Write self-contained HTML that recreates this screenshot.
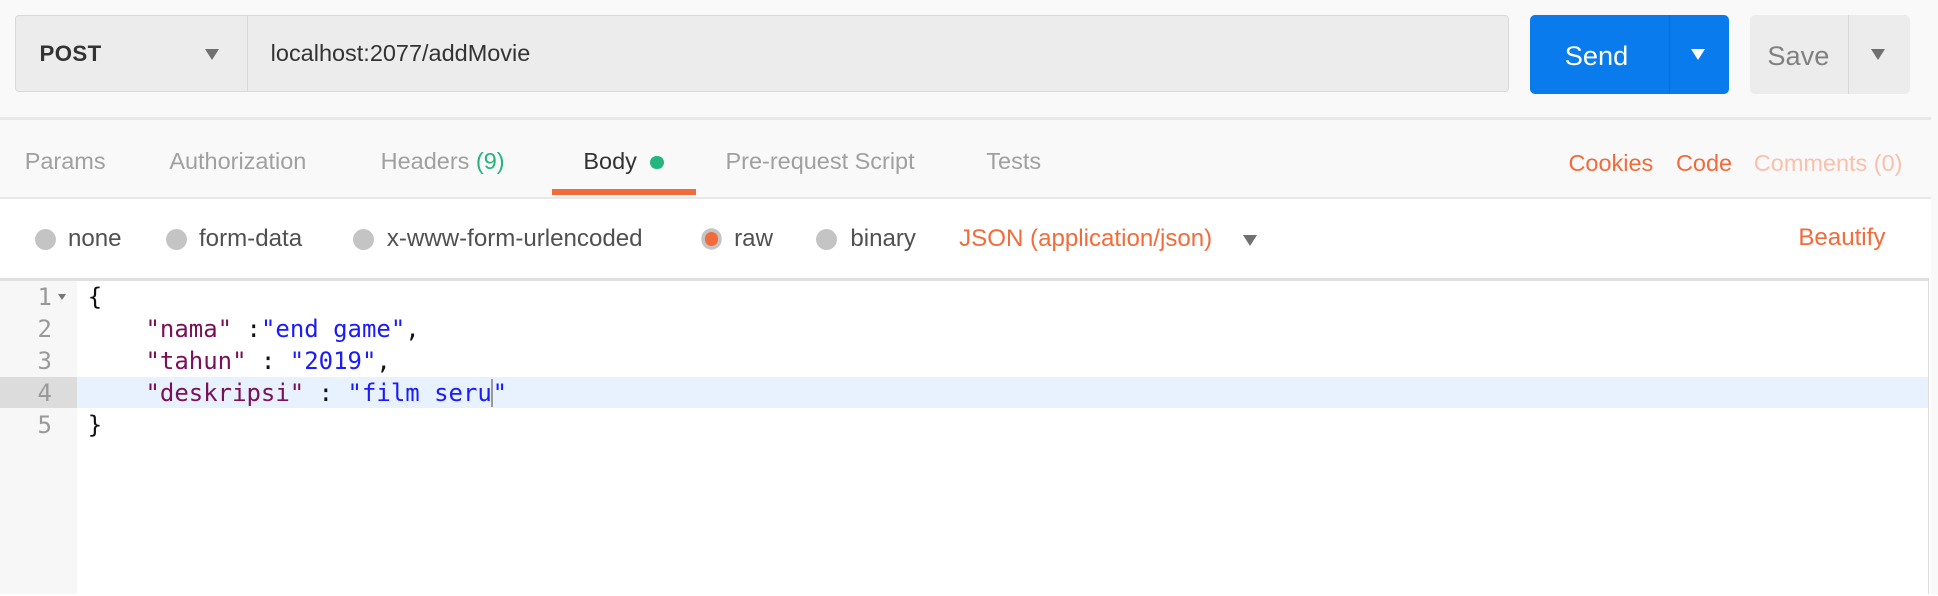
<!DOCTYPE html>
<html><head><meta charset="utf-8"><style>
html,body{margin:0;padding:0;}
body{width:1938px;height:594px;overflow:hidden;background:#fff;}
#w{zoom:1.23597;width:1568px;height:481px;position:relative;background:#f9f9f9;font-family:"Liberation Sans",sans-serif;}
.a{position:absolute;white-space:nowrap;}
.url{left:12px;top:12px;width:1207px;height:61px;background:#ececec;border:1px solid #dadada;border-radius:3px;}
.tri{width:0;height:0;border-left:6px solid transparent;border-right:6px solid transparent;border-top:9px solid #707070;}
.tab{top:120px;font-size:19px;color:#a0a0a0;}
.rad{width:17px;height:17px;border-radius:50%;background:#c4c4c4;top:185px;}
.rl{top:182px;font-size:19.5px;color:#505050;}
.code{font-family:"DejaVu Sans Mono","Liberation Mono",monospace;font-size:19.4px;line-height:26px;}
.k{color:#7a1057}.s{color:#1a1aff}
</style></head><body><div id="w">
<div class="a url"></div>
<div class="a" style="left:200px;top:13px;width:1px;height:61px;background:#d8d8d8"></div>
<div class="a" style="left:32px;top:33px;font-size:18px;color:#333;font-weight:bold;letter-spacing:0.3px">POST</div>
<div class="a tri" style="left:166px;top:40px"></div>
<div class="a" style="left:219px;top:32px;font-size:19px;color:#333">localhost:2077/addMovie</div>
<div class="a" style="left:1238px;top:12px;width:161px;height:64px;background:#097bed;border-radius:4px"></div>
<div class="a" style="left:1350px;top:12px;width:1px;height:64px;background:#0a6bd0"></div>
<div class="a" style="left:1266px;top:32px;font-size:22px;color:#fff">Send</div>
<div class="a tri" style="left:1368px;top:40px;border-top-color:#fff"></div>
<div class="a" style="left:1416px;top:12px;width:129px;height:64px;background:#ececec;border-radius:4px"></div>
<div class="a" style="left:1495px;top:12px;width:1px;height:64px;background:#d8d8d8"></div>
<div class="a" style="left:1430px;top:32px;font-size:22px;color:#808080">Save</div>
<div class="a tri" style="left:1514px;top:40px"></div>
<div class="a" style="left:0;top:95px;width:1562px;height:2px;background:#e8e8e8"></div>
<div class="a tab" style="left:20px">Params</div>
<div class="a tab" style="left:137px">Authorization</div>
<div class="a tab" style="left:308px">Headers <span style="color:#26b47f">(9)</span></div>
<div class="a tab" style="left:472px;color:#333">Body</div>
<div class="a" style="left:526px;top:126px;width:11px;height:11px;border-radius:50%;background:#26b47f"></div>
<div class="a tab" style="left:587px">Pre-request Script</div>
<div class="a tab" style="left:798px">Tests</div>
<div class="a" style="left:447px;top:153px;width:116px;height:5px;background:#f26b3a"></div>
<div class="a tab" style="left:1269px;color:#f26b3a;top:121px">Cookies</div>
<div class="a tab" style="left:1356px;color:#f26b3a;top:121px">Code</div>
<div class="a tab" style="left:1419px;color:#f9c1ab;top:121px">Comments (0)</div>
<div class="a" style="left:0;top:159px;width:1562px;height:322px;background:#fff;border-top:2px solid #e8e8e8"></div>
<div class="a rad" style="left:28px"></div><div class="a rl" style="left:55px">none</div>
<div class="a rad" style="left:134px"></div><div class="a rl" style="left:161px">form-data</div>
<div class="a rad" style="left:286px"></div><div class="a rl" style="left:313px">x-www-form-urlencoded</div>
<div class="a rad" style="background:#f26b3a;box-shadow:0 0 0 3px #c4c4c4;width:11px;height:11px;top:188px;left:570px"></div><div class="a rl" style="left:594px">raw</div>
<div class="a rad" style="left:660px"></div><div class="a rl" style="left:688px">binary</div>
<div class="a rl" style="left:776px;color:#f26b3a">JSON (application/json)</div>
<div class="a tri" style="left:1006px;top:190px"></div>
<div class="a rl" style="left:1455px;color:#f26b3a;top:181px">Beautify</div>
<div class="a" style="left:0;top:225px;width:1560px;height:2px;background:#e0e0e0"></div>
<div class="a" style="left:0;top:227px;width:62px;height:254px;background:#f7f7f7"></div>
<div class="a" style="left:62px;top:305px;width:1498px;height:25px;background:#e8f2fe"></div>
<div class="a" style="left:0;top:305px;width:62px;height:25px;background:#dcdcdc"></div>
<div class="a" style="left:1560px;top:225px;width:1px;height:256px;background:#ddd"></div>
<div class="a code" style="left:0;top:227px;width:42px;text-align:right;color:#999">1<br>2<br>3<br>4<br>5</div>
<div class="a" style="left:47px;top:238px;border-left:4px solid transparent;border-right:4px solid transparent;border-top:5px solid #777"></div>
<div class="a code" style="left:71px;top:227px;color:#111;white-space:pre">{
    <span class="k">"nama"</span> :<span class="s">"end game"</span>,
    <span class="k">"tahun"</span> : <span class="s">"2019"</span>,
    <span class="k">"deskripsi"</span> : <span class="s">"film seru</span><span style="border-left:2px solid #999;margin-left:-1px" class="s">"</span>
}</div>
</div></body></html>
